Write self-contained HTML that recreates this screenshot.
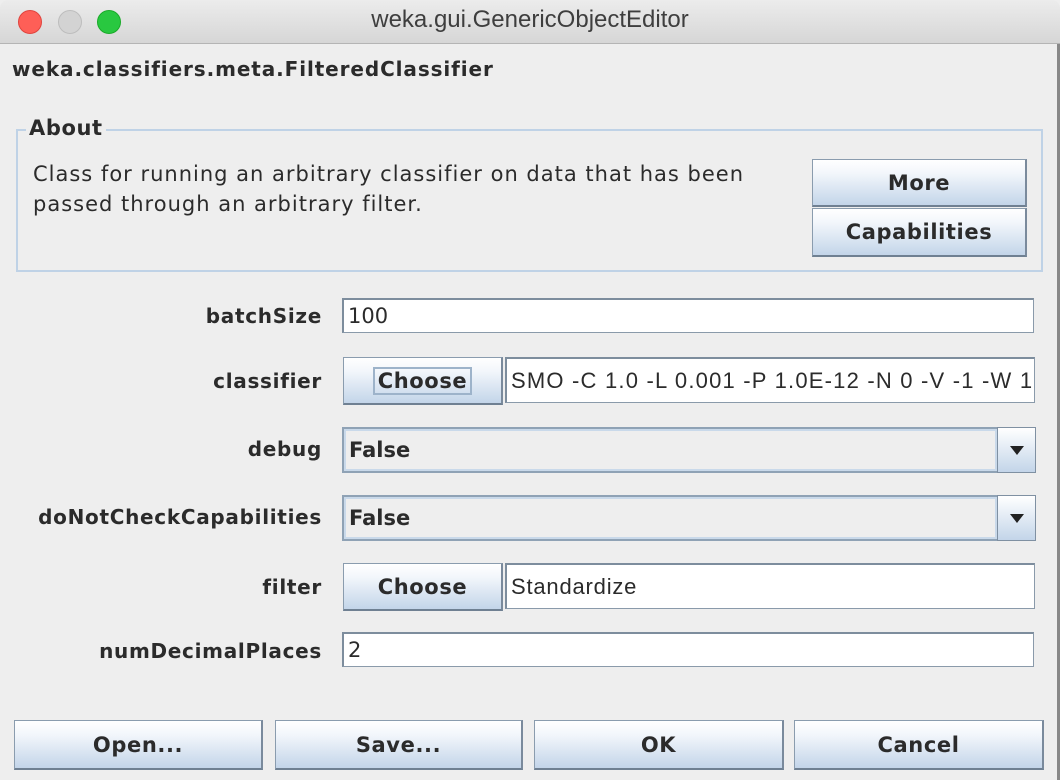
<!DOCTYPE html>
<html><head><style>
*{box-sizing:border-box;margin:0;padding:0}
body{width:1060px;height:780px;background:#eeeeee;font-family:"DejaVu Sans","Liberation Sans",sans-serif;color:#2b2b2b;position:relative;overflow:hidden}
.a{position:absolute}
.title{left:0;top:0;width:1060px;height:44px;background:linear-gradient(#ececec,#d6d6d6);border-bottom:1px solid #b4b4b4;border-radius:8px 8px 0 0}
.dot{width:24px;height:24px;border-radius:50%;top:10px}
.btn{background:linear-gradient(#ffffff 0%,#f2f6fb 30%,#c3d5e9 100%);border:1px solid #8a9cae;border-right:2px solid #7a8a9c;border-bottom:2px solid #6f8092;font-weight:bold;font-size:21px;letter-spacing:0.6px;display:flex;align-items:center;justify-content:center;color:#2b2b2b}
.lbl{font-weight:bold;font-size:20px;letter-spacing:0.7px;text-align:right;width:322px;left:0}
.fld{background:#fff;border:1px solid #8a9aaa;border-top:2px solid #7d8d9d;border-left:2px solid #7d8d9d;font-size:21px;padding-left:4px;display:flex;align-items:center;white-space:nowrap;overflow:hidden}
.combo{border:2px solid #8fa2b5;background:#eeeeee;box-shadow:inset 0 0 0 2px #c9d9ea;font-weight:bold;font-size:21px;display:flex;align-items:center;padding-left:5px}
.dd{background:linear-gradient(#fff,#c3d5e9);border:1px solid #7f90a2;display:flex;align-items:center;justify-content:center}
</style></head><body>
<div class="a title"></div>
<div class="a dot" style="left:18px;background:#fe5f57;border:1px solid #e0443e"></div>
<div class="a dot" style="left:58px;background:#d3d3d3;border:1px solid #bdbdbd"></div>
<div class="a dot" style="left:97px;background:#29c840;border:1px solid #1aab29"></div>
<div class="a" style="left:0;top:6px;width:1060px;text-align:center;font-size:24px;color:#3e3e3e;font-family:'Liberation Sans',sans-serif">weka.gui.GenericObjectEditor</div>
<div class="a" style="left:1057px;top:44px;width:3px;height:736px;background:#888"></div>
<div class="a" style="left:12px;top:57px;font-weight:bold;font-size:20px;letter-spacing:0.9px">weka.classifiers.meta.FilteredClassifier</div>

<div class="a" style="left:16px;top:129px;width:1027px;height:143px;border:2px solid #bfd2e6"></div>
<div class="a" style="left:26px;top:116px;background:#eee;padding:0 3px;font-weight:bold;font-size:21px;letter-spacing:0.6px">About</div>
<div class="a" style="left:33px;top:159px;font-size:21px;letter-spacing:1px;line-height:30px;white-space:nowrap;color:#2b2b2b">Class for running an arbitrary classifier on data that has been<br>passed through an arbitrary filter.</div>
<div class="a btn" style="left:812px;top:159px;width:215px;height:48px">More</div>
<div class="a btn" style="left:812px;top:208px;width:215px;height:49px">Capabilities</div>

<div class="a lbl" style="top:304px">batchSize</div>
<div class="a fld" style="left:342px;top:298px;width:692px;height:35px">100</div>

<div class="a lbl" style="top:369px">classifier</div>
<div class="a btn" style="left:343px;top:357px;width:160px;height:48px"><span style="border:2px solid #9db3ca;padding:0 3px">Choose</span></div>
<div class="a fld" style="left:505px;top:357px;width:530px;height:46px;font-family:'Liberation Sans',sans-serif;font-size:22px;letter-spacing:1.2px">SMO -C 1.0 -L 0.001 -P 1.0E-12 -N 0 -V -1 -W 1</div>

<div class="a lbl" style="top:437px">debug</div>
<div class="a combo" style="left:342px;top:427px;width:657px;height:46px">False</div>
<div class="a dd" style="left:997px;top:427px;width:39px;height:46px"><svg width="14" height="9"><path d="M0 0H14L7 9Z" fill="#222"/></svg></div>

<div class="a lbl" style="top:505px">doNotCheckCapabilities</div>
<div class="a combo" style="left:342px;top:495px;width:657px;height:46px">False</div>
<div class="a dd" style="left:997px;top:495px;width:39px;height:46px"><svg width="14" height="9"><path d="M0 0H14L7 9Z" fill="#222"/></svg></div>

<div class="a lbl" style="top:575px">filter</div>
<div class="a btn" style="left:343px;top:563px;width:160px;height:48px">Choose</div>
<div class="a fld" style="left:505px;top:563px;width:530px;height:46px;font-family:'Liberation Sans',sans-serif;font-size:22px;letter-spacing:0.8px">Standardize</div>

<div class="a lbl" style="top:639px">numDecimalPlaces</div>
<div class="a fld" style="left:342px;top:632px;width:692px;height:35px">2</div>

<div class="a btn" style="left:14px;top:720px;width:249px;height:50px">Open...</div>
<div class="a btn" style="left:275px;top:720px;width:248px;height:50px">Save...</div>
<div class="a btn" style="left:534px;top:720px;width:250px;height:50px">OK</div>
<div class="a btn" style="left:794px;top:720px;width:250px;height:50px">Cancel</div>
</body></html>
